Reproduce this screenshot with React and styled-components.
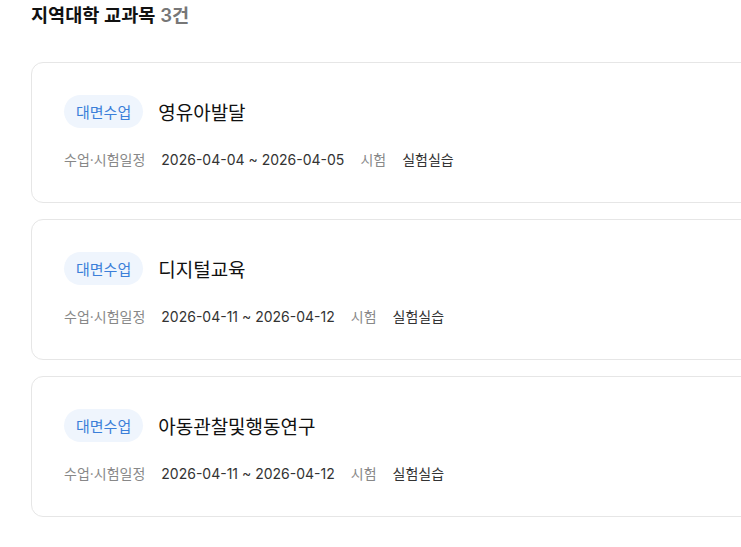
import React from "react";
import styled, { createGlobalStyle } from "styled-components";

const courses = [
  { type: "대면수업", name: "영유아발달", period: "2026-04-04 ~ 2026-04-05", exam: "실험실습" },
  { type: "대면수업", name: "디지털교육", period: "2026-04-11 ~ 2026-04-12", exam: "실험실습" },
  { type: "대면수업", name: "아동관찰및행동연구", period: "2026-04-11 ~ 2026-04-12", exam: "실험실습" },
];

const App = () => {
  return (
    <>
      <GlobalStyle />
      <Page>
        <Heading>
          지역대학 교과목 <Count>3건</Count>
        </Heading>
        <List>
          {courses.map((c, i) => (
            <Card key={i}>
              <TitleRow>
                <Badge>{c.type}</Badge>
                <CourseName>{c.name}</CourseName>
              </TitleRow>
              <InfoRow>
                <Label>수업·시험일정</Label>
                <Value>{c.period}</Value>
                <Label>시험</Label>
                <Value>{c.exam}</Value>
              </InfoRow>
            </Card>
          ))}
        </List>
      </Page>
    </>
  );
};

const GlobalStyle = createGlobalStyle`
  html, body {
    margin: 0;
    padding: 0;
    background: #fff;
    overflow: hidden;
  }
  body {
    font-family: Inter, "Noto Sans CJK KR", sans-serif;
    color: #111;
  }
`;

const Page = styled.div`
  padding: 3px 0 0 31px;
  width: 820px;
`;

const Heading = styled.h2`
  margin: 0;
  font-size: 18.6px;
  line-height: 24px;
  font-weight: 600;
  color: #111;
`;

const Count = styled.span`
  color: #777;
`;

const List = styled.div`
  display: flex;
  flex-direction: column;
  gap: 16px;
  margin-top: 35px;
`;

const Card = styled.div`
  box-sizing: border-box;
  height: 141px;
  border: 1px solid #e6e6e6;
  border-radius: 12px;
  padding: 32px 32px 31px;
  display: flex;
  flex-direction: column;
  gap: 22px;
`;

const TitleRow = styled.div`
  display: flex;
  align-items: center;
  gap: 15px;
`;

const Badge = styled.span`
  display: inline-flex;
  align-items: center;
  height: 33px;
  padding: 0 12px;
  border-radius: 17px;
  background: #eff5fd;
  color: #3b7fd9;
  font-size: 15px;
`;

const CourseName = styled.span`
  font-size: 19px;
  color: #111;
`;

const InfoRow = styled.div`
  display: flex;
  align-items: center;
  gap: 16px;
  font-size: 14px;
  line-height: 20px;
`;

const Label = styled.span`
  color: #888;
`;

const Value = styled.span`
  color: #333;
`;

export default App;
